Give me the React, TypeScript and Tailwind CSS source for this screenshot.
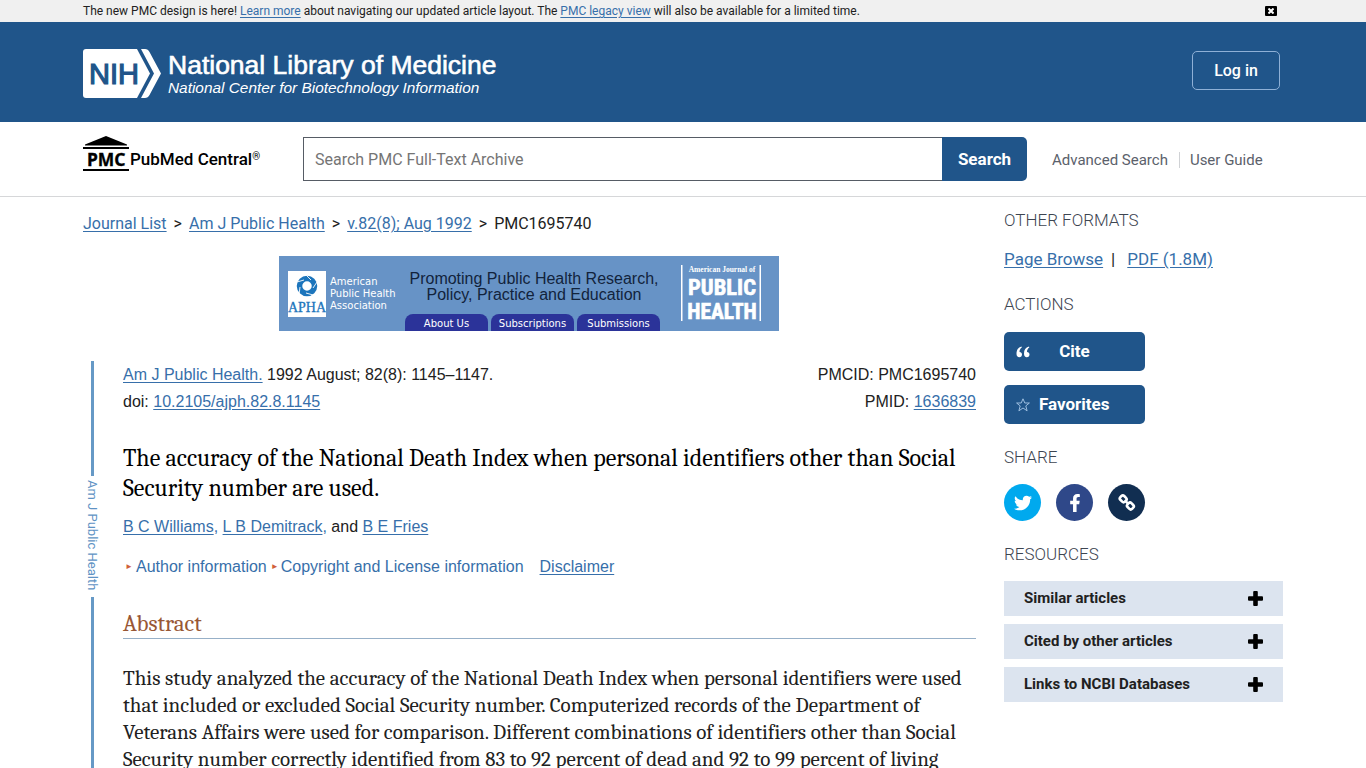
import type { ReactNode } from "react";
import { FaFacebookF, FaTwitter } from "react-icons/fa";

const resources = ["Similar articles", "Cited by other articles", "Links to NCBI Databases"];
const bannerTabs = ["About Us", "Subscriptions", "Submissions"];

const linkClass = "text-[#376faa] underline underline-offset-2";

function NlmLogo() {
  return (
    <svg viewBox="0 0 416 49" className="h-[49px] w-[416px]" role="img" aria-label="NIH National Library of Medicine">
      <path d="M3 0H54L67 24.500L54 49H3Q0 49 0 46V3Q0 0 3 0Z" fill="#fff" />
      <path d="M58 0H62Q65 0 66.500 3L78 24.500L66.500 46Q65 49 62 49H58L71 24.500Z" fill="#fff" />
      <g fontFamily="Liberation Sans, Arial, sans-serif" fill="#fff">
        <text x="6" y="35" fontSize="29" fill="#20558a" stroke="#20558a" strokeWidth="1.200">NIH</text>
        <text x="85" y="24.500" fontSize="26.500" stroke="#fff" strokeWidth="0.600">National Library of Medicine</text>
        <text x="85" y="44" fontSize="15.400" fontStyle="italic">National Center for Biotechnology Information</text>
      </g>
    </svg>
  );
}

function PmcLogo() {
  return (
    <a href="#pmc" className="flex items-center gap-[1px] text-[17px] font-medium text-black">
      <svg viewBox="0 0 46 36" className="h-9 w-[46px]" role="img" aria-label="PMC">
        <path d="M23 0L44 8.500V9.500H2V8.500Z" />
        <path d="M0 11H46V13H0ZM0 33H46V35H0Z" />
        <text x="4" y="30" fontFamily="Noto Sans, sans-serif" fontSize="17.500" fontWeight="700" stroke="#000" strokeWidth="0.300">PMC</text>
      </svg>
      <span className="pt-3">PubMed Central<sup className="text-[10px]">®</sup></span>
    </a>
  );
}

function AphaLogo() {
  return (
    <svg viewBox="0 0 38 46" className="mt-[15px] ml-[9px] h-[46px] w-[38px] shrink-0" role="img" aria-label="APHA">
      <path d="M0 0H38V46H0Z" fill="#fff" />
      <circle cx="19" cy="15" r="7.500" fill="none" stroke="#1c75bc" strokeWidth="5.500" />
      <path d="M18 4L23 9M29 11L25 17M25 24L18 22M11 24L12 16M9 11L16 9" stroke="#fff" strokeWidth="0.900" />
      <text x="19" y="41" textAnchor="middle" fontFamily="Liberation Serif, serif" fontSize="14" stroke="#1c75bc" strokeWidth="0.300" fill="#1c75bc">APHA</text>
    </svg>
  );
}

function JournalBanner() {
  return (
    <div className="mx-auto flex h-[75px] w-[500px] bg-[#6793c6] font-['Liberation_Sans',Arial,sans-serif]">
      <AphaLogo />
      <p className="mt-5 ml-1 w-[74px] shrink-0 font-['DejaVu_Sans',Verdana,sans-serif] text-[10px] leading-3 text-white">
        American<br />Public Health<br />Association
      </p>
      <div className="ml-[1px] flex w-[256px] shrink-0 flex-col justify-between pt-[15px]">
        <p className="pl-[2px] text-center text-base leading-4 text-[#12233c]">
          Promoting Public Health Research,<br />Policy, Practice and Education
        </p>
        <div className="flex gap-[3px]">
          {bannerTabs.map((tab) => (
            <a key={tab} href="#tab" className="h-[17px] w-[83px] rounded-t-lg bg-[#2b3399] pt-[2px] text-center font-['DejaVu_Sans',Verdana,sans-serif] text-[10px] leading-4 text-white">
              {tab}
            </a>
          ))}
        </div>
      </div>
      <svg viewBox="0 0 80 60" className="mt-2 ml-5 h-[60px] w-20 shrink-0" role="img" aria-label="American Journal of Public Health">
        <path d="M0 1H1.500V57H0ZM78.500 1H80V57H78.500Z" fill="#fff" />
        <text x="41" y="8" textAnchor="middle" fontFamily="Liberation Serif, serif" fontSize="7.500" fontWeight="700" fill="#fff">American Journal of</text>
        <g fontFamily="Liberation Sans Narrow, Roboto Condensed, sans-serif" fontWeight="700" fill="#fff" stroke="#fff" strokeWidth="0.600" textAnchor="middle">
          <text x="41" y="31" fontSize="22.500">PUBLIC</text>
          <text x="41" y="55" fontSize="21.500">HEALTH</text>
        </g>
      </svg>
    </div>
  );
}

function AsideSection({ title, children }: { title: string; children: ReactNode }) {
  return (
    <section>
      <h2 className="text-[17px] leading-6 font-light text-[#3d4551]">{title}</h2>
      {children}
    </section>
  );
}

function QuoteIcon() {
  return (
    <svg viewBox="0 0 14 12" className="h-3 w-[14px] shrink-0" fill="currentColor" aria-hidden="true">
      <path d="M5.500 0.500C2 1.500 0.500 4 0.500 7.500C0.500 10 1.600 11.300 3.300 11.300C5 11.300 6 10.100 6 8.600C6 7 5 6 3.500 6C3.500 4 4.300 2.500 5.800 1.500Z" />
      <path d="M13 0.500C9.500 1.500 8 4 8 7.500C8 10 9.100 11.300 10.800 11.300C12.500 11.300 13.500 10.100 13.500 8.600C13.500 7 12.500 6 11 6C11 4 11.800 2.500 13.300 1.500Z" />
    </svg>
  );
}

function StarIcon() {
  return (
    <svg viewBox="0 0 14 14" className="size-[14px] shrink-0" fill="none" stroke="#a9c8e8" strokeWidth="0.900" strokeLinejoin="round" aria-hidden="true">
      <path d="M7 0.800L8.800 5H13.400L9.800 7.900L11.100 12.800L7 10L2.900 12.800L4.200 7.900L0.600 5H5.200Z" />
    </svg>
  );
}

function ChainIcon() {
  return (
    <svg viewBox="0 0 20 20" className="size-5" fill="none" stroke="currentColor" strokeWidth="2.600" aria-hidden="true">
      <rect x="-3.200" y="-2.700" width="6.400" height="5.400" rx="1.900" transform="translate(6.200 5.800) rotate(45)" />
      <rect x="-3.200" y="-2.700" width="6.400" height="5.400" rx="1.900" transform="translate(13.400 13) rotate(45)" />
      <path d="M8 7.600L11.600 11.200" />
    </svg>
  );
}

function PlusIcon() {
  return (
    <svg viewBox="0 0 15 15" className="size-[15px]" aria-hidden="true">
      <rect x="5.200" y="0" width="4.600" height="15" rx="1" />
      <rect x="0" y="5.200" width="15" height="4.600" rx="1" />
    </svg>
  );
}

function Article() {
  return (
    <article className="mt-[30px] flex gap-[22px]">
      <div className="flex w-[18px] shrink-0 flex-col items-center">
        <div className="h-[115px] w-[3px] bg-[#6699c6]" />
        <a href="#journal" className="mt-1 mb-1 h-[113px] text-[13px] leading-5 text-[#5f93c4] [writing-mode:vertical-rl]">Am J Public Health</a>
        <div className="w-[3px] grow bg-[#6699c6]" />
      </div>
      <div className="min-w-0 grow font-['Liberation_Sans',Arial,sans-serif] text-base">
        <div className="flex justify-between leading-[27px]">
          <div>
            <a href="#journal" className={linkClass}>Am J Public Health.</a> 1992 August; 82(8): 1145–1147.
            <div>doi: <a href="#doi" className={linkClass}>10.2105/ajph.82.8.1145</a></div>
          </div>
          <div className="text-right">
            <div>PMCID: PMC1695740</div>
            <div>PMID: <a href="#pmid" className={linkClass}>1636839</a></div>
          </div>
        </div>
        <h1 className="mt-7 font-[Cambria,'Liberation_Serif',serif] text-2xl leading-[30px] text-black">
          The accuracy of the National Death Index when personal identifiers other than Social Security number are used.
        </h1>
        <p className="mt-3 leading-6 text-[#376faa]">
          <a href="#williams" className={linkClass}>B C Williams</a>, <a href="#demitrack" className={linkClass}>L B Demitrack</a>, <span className="text-[#212121]">and</span> <a href="#fries" className={linkClass}>B E Fries</a>
        </p>
        <div className="mt-4 flex items-center leading-6 text-[#376faa]">
          <span className="w-[13px] pl-[2px] text-[8px] text-[#d0603a]">►</span>
          <a href="#authors">Author information</a>
          <span className="w-[14px] pl-[4px] text-[8px] text-[#d0603a]">►</span>
          <a href="#license">Copyright and License information</a>
          <a href="#disclaimer" className={`ml-4 ${linkClass}`}>Disclaimer</a>
        </div>
        <h2 className="mt-[31px] border-b border-[#97b0c8] font-[Cambria,'Liberation_Serif',serif] text-[23px] leading-7 text-[#985735]">Abstract</h2>
        <p className="mt-[26px] font-[Cambria,'Liberation_Serif',serif] text-[21px] leading-[27px]">
          This study analyzed the accuracy of the National Death Index when personal identifiers were used that included or excluded Social Security number. Computerized records of the Department of Veterans Affairs were used for comparison. Different combinations of identifiers other than Social Security number correctly identified from 83 to 92 percent of dead and 92 to 99 percent of living
        </p>
      </div>
    </article>
  );
}

export default function App() {
  return (
    <div className="h-screen overflow-hidden bg-white font-[Roboto,sans-serif] text-[#212121]">
      <div className="bg-[#f0f0f0]">
        <div className="mx-auto flex h-[22px] max-w-[1200px] items-center justify-between pr-[6px] text-xs">
          <p>
            The new PMC design is here! <a href="#learn" className={linkClass}>Learn more</a> about navigating our updated article layout. The <a href="#legacy" className={linkClass}>PMC legacy view</a> will also be available for a limited time.
          </p>
          <button type="button" aria-label="Close" className="flex h-[10px] w-3 items-center justify-center rounded-[1px] bg-black">
            <svg viewBox="0 0 6 6" className="size-[6px]" stroke="#fff" strokeWidth="2" aria-hidden="true">
              <path d="M0.500 0.500L5.500 5.500M5.500 0.500L0.500 5.500" />
            </svg>
          </button>
        </div>
      </div>

      <header className="bg-[#20558a]">
        <div className="mx-auto flex h-[100px] max-w-[1200px] items-start justify-between pr-[3px]">
          <a href="#nlm" className="pt-[27px]"><NlmLogo /></a>
          <button type="button" className="mt-[29px] h-[39px] w-[88px] rounded-[5px] border border-[#8fb0d6] font-medium text-white">Log in</button>
        </div>
      </header>

      <div className="border-b border-[#d6d7d9]">
        <div className="mx-auto flex h-[74px] max-w-[1200px] items-center">
          <div className="w-[220px] shrink-0 pb-[10px]"><PmcLogo /></div>
          <form className="flex h-11 w-[724px]">
            <input type="text" aria-label="Search PMC Full-Text Archive" placeholder="Search PMC Full-Text Archive" className="min-w-0 grow border border-r-0 border-[#565c65] px-[11px] pt-[2px] placeholder:text-[#757575]" />
            <button type="submit" className="w-[85px] rounded-r-[5px] bg-[#20558a] pt-[2px] text-[17px] font-bold text-white">Search</button>
          </form>
          <nav className="ml-[25px] flex items-center pt-[2px] text-[15px] leading-4 text-[#5b616b]">
            <a href="#advanced" className="border-r border-[#d0d2d5] pr-[11px]">Advanced Search</a>
            <a href="#guide" className="pl-[10px]">User Guide</a>
          </nav>
        </div>
      </div>

      <div className="mx-auto flex max-w-[1200px] gap-7">
        <main className="min-w-0 grow pt-[15px]">
          <nav className="flex gap-[7px] leading-6">
            <a href="#list" className={linkClass}>Journal List</a>
            <span>&gt;</span>
            <a href="#journal" className={linkClass}>Am J Public Health</a>
            <span>&gt;</span>
            <a href="#volume" className={linkClass}>v.82(8); Aug 1992</a>
            <span>&gt;</span>
            <span>PMC1695740</span>
          </nav>
          <div className="mt-5 pr-[1px]"><JournalBanner /></div>
          <Article />
        </main>

        <aside className="flex w-[279px] shrink-0 flex-col gap-[21px] pt-[11px]">
          <AsideSection title="OTHER FORMATS">
            <p className="mt-[15px] text-[17px] leading-6">
              <a href="#page" className={linkClass}>Page Browse</a>
              <span className="px-2">|</span>
              <a href="#pdf" className={`ml-1 ${linkClass}`}>PDF (1.8M)</a>
            </p>
          </AsideSection>
          <AsideSection title="ACTIONS">
            <div className="mt-4 flex w-[141px] flex-col gap-[14px] text-[17px] font-bold text-white">
              <button type="button" className="flex h-[39px] items-center rounded-[5px] bg-[#20558a] px-3">
                <QuoteIcon />
                <span className="w-[89px]">Cite</span>
              </button>
              <button type="button" className="flex h-[39px] items-center gap-[9px] rounded-[5px] bg-[#20558a] px-3">
                <StarIcon />
                Favorites
              </button>
            </div>
          </AsideSection>
          <AsideSection title="SHARE">
            <div className="mt-[15px] flex gap-[15px] text-white">
              <button type="button" aria-label="Twitter" className="flex size-[37px] items-center justify-center rounded-full bg-[#00a9ee]"><FaTwitter size={18} /></button>
              <button type="button" aria-label="Facebook" className="flex size-[37px] items-center justify-center rounded-full bg-[#2f4889]"><FaFacebookF size={18} /></button>
              <button type="button" aria-label="Permalink" className="flex size-[37px] items-center justify-center rounded-full bg-[#112e51]"><ChainIcon /></button>
            </div>
          </AsideSection>
          <AsideSection title="RESOURCES">
            <div className="mt-[15px] flex flex-col gap-2">
              {resources.map((item) => (
                <button key={item} type="button" className="flex h-[35px] items-center justify-between bg-[#dce4ef] px-5 pb-[1px] text-[15px] font-bold">
                  {item}
                  <PlusIcon />
                </button>
              ))}
            </div>
          </AsideSection>
        </aside>
      </div>
    </div>
  );
}
